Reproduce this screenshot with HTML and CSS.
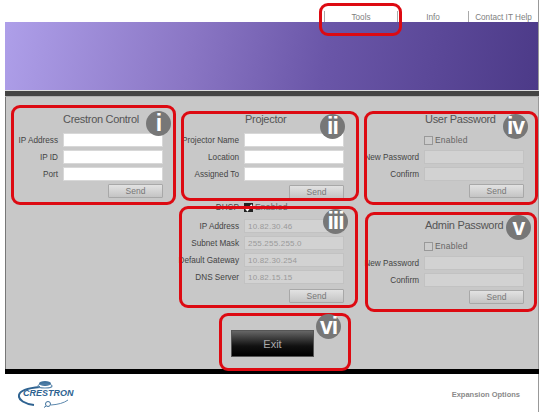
FILE: index.html
```html
<!DOCTYPE html>
<html lang="en">
<head>
    <meta charset="UTF-8">
    <meta name="viewport" content="width=device-width, initial-scale=1.0">
    <title>Crestron Control</title>
    <link rel="stylesheet" href="styles.css">
</head>
<body>
    <div class="page">
        <nav class="topnav">
            <a class="nav-tools">Tools</a>
            <a class="nav-info">Info</a>
            <a class="nav-help">Contact IT Help</a>
        </nav>
        <div class="banner"></div>
        <div class="divider"></div>

        <main class="panel">
            <!-- Crestron Control -->
            <section class="col col-first">
                <h2 class="title">Crestron Control</h2>
                <div class="row"><label>IP Address</label><input type="text"></div>
                <div class="row"><label>IP ID</label><input type="text"></div>
                <div class="row"><label>Port</label><input type="text"></div>
                <div class="row-send"><button>Send</button></div>
            </section>

            <!-- Projector and network -->
            <section class="col col-wide">
                <h2 class="title">Projector</h2>
                <div class="row"><label>Projector Name</label><input type="text"></div>
                <div class="row"><label>Location</label><input type="text"></div>
                <div class="row"><label>Assigned To</label><input type="text"></div>
                <div class="row-send row-send-proj"><button>Send</button></div>

                <div class="network">
                    <div class="row row-check">
                        <label>DHCP</label>
                        <span class="check check-on">
                            <svg viewBox="0 0 8 8" width="8" height="8"><path d="M1 4l2 2.500 4-5" fill="none" stroke="#fff" stroke-width="1.500"/></svg>
                        </span>
                        <span class="check-text">Enabled</span>
                    </div>
                    <div class="row"><label>IP Address</label><input type="text" value="10.82.30.46" disabled></div>
                    <div class="row"><label>Subnet Mask</label><input type="text" value="255.255.255.0" disabled></div>
                    <div class="row"><label>Default Gateway</label><input type="text" value="10.82.30.254" disabled></div>
                    <div class="row"><label>DNS Server</label><input type="text" value="10.82.15.15" disabled></div>
                    <div class="row-send row-send-net"><button>Send</button></div>
                </div>

                <button class="exit">Exit</button>
            </section>

            <!-- Passwords -->
            <section class="col col-wide">
                <h2 class="title">User Password</h2>
                <div class="row row-check">
                    <label></label>
                    <span class="check"></span>
                    <span class="check-text">Enabled</span>
                </div>
                <div class="row row-first-pass"><label>New Password</label><input type="text" disabled></div>
                <div class="row"><label>Confirm</label><input type="text" disabled></div>
                <div class="row-send"><button>Send</button></div>

                <div class="admin">
                    <h2 class="title">Admin Password</h2>
                    <div class="row row-check">
                        <label></label>
                        <span class="check"></span>
                        <span class="check-text">Enabled</span>
                    </div>
                    <div class="row"><label>New Password</label><input type="text" disabled></div>
                    <div class="row"><label>Confirm</label><input type="text" disabled></div>
                    <div class="row-send"><button>Send</button></div>
                </div>
            </section>
        </main>
        <div class="bottom-bar"></div>

        <footer class="footer">
            <svg class="logo" viewBox="0 0 60 28" width="60" height="28">
                <path d="M22 7C9 8 2 11 1 15c-1 5 6 9 15 10" fill="none" stroke="#2f6391" stroke-width="2"/>
                <path d="M33 25c7-.5 13-2 17-5" fill="none" stroke="#5c88ad" stroke-width="1"/>
                <ellipse cx="27" cy="3.500" rx="6" ry="2.500" fill="#3f719c"/>
                <ellipse cx="27" cy="6" rx="7" ry="2" fill="none" stroke="#5c88ad" stroke-width="1.200"/>
                <circle cx="30" cy="24" r="2.500" fill="none" stroke="#3f719c" stroke-width="1"/>
                <path d="M28 26l-2 1.500" stroke="#3f719c" stroke-width="1"/>
                <text x="5" y="16" class="logo-text">CRESTRON</text>
            </svg>
            <span class="expansion">Expansion Options</span>
        </footer>
    </div>

    <!-- Red call-outs drawn over the screenshot -->
    <div class="ring ring-tools"></div>
    <div class="ring ring-i"><span class="badge">i</span></div>
    <div class="ring ring-ii"><span class="badge">ii</span></div>
    <div class="ring ring-iii"><span class="badge">iii</span></div>
    <div class="ring ring-iv"><span class="badge">iv</span></div>
    <div class="ring ring-v"><span class="badge">v</span></div>
    <div class="ring ring-vi"><span class="badge">vi</span></div>
</body>
</html>
```

FILE: styles.css
```css
* {
    box-sizing: border-box;
}
html, body {
    height: 100%;
}
body {
    margin: 0;
    background-color: #fff;
    font-family: "Liberation Sans", Arial, sans-serif;
    font-size: 8.2px;
    color: #444;
    overflow: hidden;
    position: relative;
}
.page {
    width: 534px;
    margin-left: 5px;
}
.topnav {
    display: flex;
    justify-content: flex-end;
    height: 22px;
    padding-top: 11px;
    border-right: 1px solid #999;
}
.topnav a {
    display: block;
    height: 11px;
    line-height: 13px;
    text-align: center;
    color: #808080;
    font-size: 8.2px;
    border-left: 1px solid #aaa;
}
.nav-tools {
    width: 73px;
}
.nav-info {
    width: 71px;
}
.nav-help {
    width: 70px;
}
.banner {
    height: 68px;
    background: linear-gradient(100deg, #ae9fe9 0%, #8a76c4 35%, #6a56a8 60%, #4c3a88 100%);
    border-right: 1px solid #999;
}
.divider {
    height: 7px;
    background-color: #444;
    border-top: 1px solid #ddd;
    border-bottom: 1px solid #b0b0b0;
}
.panel {
    display: grid;
    grid-template-columns: 172px 180px 1fr;
    height: 272px;
    padding-top: 14px;
    background-color: #c8c8c8;
    border-left: 1px solid #777;
    border-right: 1px solid #999;
}
.title {
    margin: 0 0 6px 0;
    height: 16px;
    padding-left: 57px;
    font-size: 11px;
    font-weight: normal;
    line-height: 16px;
    letter-spacing: -0.3px;
    color: #555;
    white-space: nowrap;
}
.col-wide .title {
    padding-left: 67px;
}
.row {
    display: flex;
    align-items: center;
    justify-content: flex-end;
    height: 14px;
    margin-bottom: 3px;
    width: 157px;
}
.col-wide .row {
    width: 166px;
}
.row label {
    margin-right: 5px;
    white-space: nowrap;
}
.row input {
    flex: none;
    width: 100px;
    height: 14px;
    padding: 0 3px;
    font-family: inherit;
    font-size: 8px;
    letter-spacing: 0.2px;
    background-color: #fff;
    border: 1px solid #d8d8d8;
    border-radius: 0;
    outline: none;
}
.row input:disabled {
    background-color: #d2d2d2;
    border-color: #c2c2c2;
    color: #9a9a9a;
}
.row-check {
    justify-content: flex-start;
    padding-left: 66px;
}
.row-check label {
    position: absolute;
    transform: translateX(-100%);
    margin: 0 0 0 -5px;
}
.check {
    flex: none;
    display: block;
    width: 9px;
    height: 9px;
    margin-right: 2px;
    background-color: #ccc;
    border: 1px solid #999;
}
.check-on {
    background-color: #222;
    border-color: #222;
}
.check-on svg {
    display: block;
    margin: -1px;
    width: 9px;
    height: 9px;
}
.check-text {
    font-size: 8.5px;
    color: #666;
    letter-spacing: 0.2px;
}
.row-send {
    display: flex;
    justify-content: flex-end;
    width: 157px;
}
.col-wide .row-send {
    width: 166px;
}
.row-send button {
    width: 55px;
    height: 14px;
    padding: 0;
    font-family: inherit;
    font-size: 8.5px;
    color: #777;
    background: linear-gradient(#e2e2e2, #c4c4c4);
    border: 1px solid #a8a8a8;
    border-radius: 1px;
}
.row-send-proj {
    padding-top: 1px;
}
.network {
    margin-top: 1px;
}
.network .row-check {
    margin-bottom: 5px;
}
.row-send-net {
    padding-top: 2px;
}
.exit {
    display: block;
    width: 83px;
    height: 27px;
    margin: 27px 0 0 53px;
    padding: 0;
    font-family: inherit;
    font-size: 11px;
    color: #aaa;
    background: linear-gradient(#666, #111 60%, #000);
    border: 1px solid #555;
}
.admin {
    margin-top: 19px;
}
.row-first-pass {
    margin-top: 1px;
}
.bottom-bar {
    height: 5px;
    background-color: #000;
}
.footer {
    display: flex;
    align-items: flex-start;
    justify-content: space-between;
    height: 38px;
    padding: 6px 18px 0 13px;
    border-right: 1px solid #999;
}
.logo {
    display: block;
}
.logo-text {
    font-size: 9px;
    font-weight: bold;
    font-style: italic;
    fill: #2f6391;
}
.expansion {
    margin-top: 10px;
    font-size: 7.5px;
    font-weight: bold;
    color: #8a8a8a;
}

/* call-outs */
.ring {
    position: absolute;
    border: 3px solid #dd0a12;
    border-radius: 9px;
}
.ring-tools {
    left: 319px;
    top: 3px;
    width: 83px;
    height: 33px;
}
.ring-i {
    left: 11px;
    top: 105px;
    width: 165px;
    height: 100px;
}
.ring-ii {
    left: 181px;
    top: 111px;
    width: 178px;
    height: 90px;
}
.ring-iii {
    left: 179px;
    top: 206px;
    width: 179px;
    height: 102px;
}
.ring-iv {
    left: 364px;
    top: 111px;
    width: 174px;
    height: 94px;
}
.ring-v {
    left: 365px;
    top: 212px;
    width: 172px;
    height: 100px;
}
.ring-vi {
    left: 219px;
    top: 313px;
    width: 132px;
    height: 58px;
}
.badge {
    position: absolute;
    width: 25px;
    height: 25px;
    border-radius: 50%;
    background-color: #777;
    color: #fff;
    font-size: 23px;
    font-weight: bold;
    line-height: 24px;
    letter-spacing: -1px;
    text-align: center;
}
.ring-i .badge {
    left: 132px;
    top: 3px;
}
.ring-ii .badge {
    left: 136px;
    top: 0;
}
.ring-iii .badge {
    left: 141px;
    top: 0;
}
.ring-iv .badge {
    left: 136px;
    top: 0;
}
.ring-v .badge {
    left: 138px;
    top: 0;
}
.ring-vi .badge {
    left: 94px;
    top: -2px;
}
```
